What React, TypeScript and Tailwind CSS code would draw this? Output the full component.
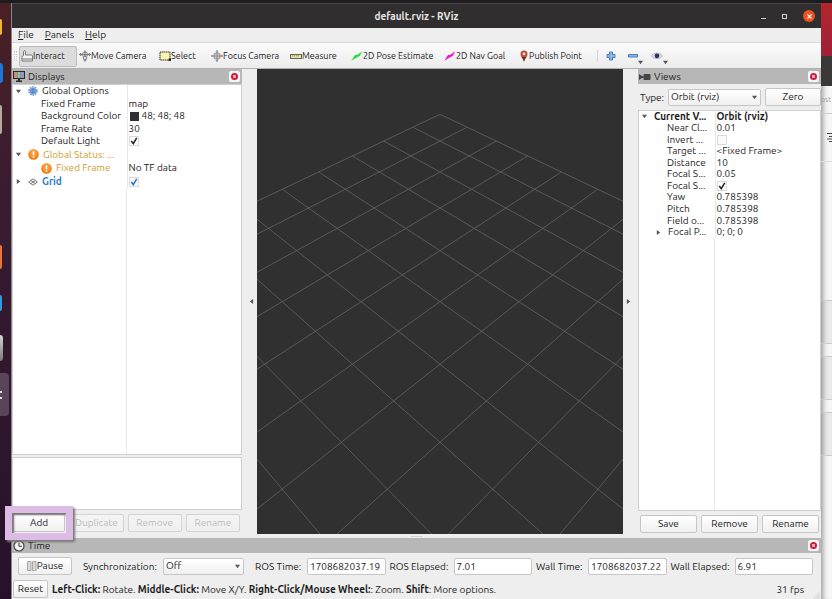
import { useState, type ReactNode } from 'react';
import { clsx } from 'clsx';

interface TreeRow {
  name: string;
  value?: string;
  indent: number;
  arrow?: 'open' | 'closed';
  icon?: ReactNode;
  checked?: boolean;
  swatch?: boolean;
  tone?: string;
  bold?: boolean;
}

const GRID_CELLS = 10;

// Projects a ground plane point (cells counted from the far corner) to the view
function project(i: number, j: number) {
  const depth = 1 - (i + j) / 30;
  return { x: 183 + ((i - j) * 26.3) / depth, y: 374.8 / depth - 329.5 };
}

function GearIcon() {
  return (
    <svg viewBox="0 0 10 10" className="size-2.5 shrink-0">
      <circle cx="5" cy="5" r="4" fill="none" stroke="#6d97cf" strokeWidth="1.6" strokeDasharray="1.6 0.9" />
      <circle cx="5" cy="5" r="3.6" fill="#8fb3e2" />
      <path d="M1.500 5h7M5 1.800v6.400M2.500 3.200h5M2.500 6.800h5" stroke="#4473b5" strokeWidth="0.7" />
    </svg>
  );
}

function WarnIcon() {
  return (
    <svg viewBox="0 0 12 12" className="size-[11px] shrink-0">
      <circle cx="6" cy="6" r="5.7" fill="#f07d10" />
      <circle cx="6" cy="5" r="4.2" fill="#fb9a3b" />
      <path d="M6 2.4v4.4" stroke="#fff" strokeWidth="1.7" />
      <circle cx="6" cy="8.8" r="1" fill="#fff" />
    </svg>
  );
}

function GridIcon() {
  return (
    <svg viewBox="0 0 12 10" className="h-2 w-2.5 shrink-0" fill="none" stroke="#555" strokeWidth="1">
      <path d="M6 1 11.5 5 6 9 .5 5zM3.2 3l5.6 4M8.8 3 3.2 7" />
    </svg>
  );
}

function MonitorIcon() {
  return (
    <svg viewBox="0 0 12 11" className="h-[11px] w-3">
      <path d="M0 0h12v8H0z" fill="#2b2b2b" />
      <path d="M1 1h3.4v6H1z" fill="#d98583" />
      <path d="M4.4 1h3.3v6H4.4z" fill="#83cf97" />
      <path d="M7.7 1H11v6H7.7z" fill="#9a92cf" />
      <path d="M5 8h2v1.500h2V11H3V9.500h2z" fill="#2b2b2b" />
    </svg>
  );
}

function CameraIcon() {
  return (
    <svg viewBox="0 0 12 8" className="h-2 w-3" fill="#444">
      <path d="M0 1v6l3-2h1.500V3H3z" />
      <rect x="4.5" y="1" width="7" height="6" rx="1" />
    </svg>
  );
}

function ClockIcon() {
  return (
    <svg viewBox="0 0 12 12" className="size-3">
      <circle cx="6" cy="6" r="5" fill="#f4f4f4" stroke="#444" strokeWidth="1.2" />
      <path d="M6 2.5V6.3h3" fill="none" stroke="#333" strokeWidth="1" />
    </svg>
  );
}

const toolIcons = {
  interact: (
    <svg viewBox="0 0 12 12" className="size-3" fill="#f4f4f4" stroke="#777" strokeWidth="1">
      <path d="M1 11V6.5l1.6-1V1.6c0-1.3 2-1.3 2 0V5h5.8c.8 0 1.1.5 1.1 1.2V11z" />
      <path d="M1.2 9h10" fill="none" />
    </svg>
  ),
  move: (
    <svg viewBox="0 0 12 12" className="size-3" fill="none" stroke="#777" strokeWidth="0.9">
      <path d="M0 4.5h12M2 3 .5 4.5 2 6M10 3l1.5 1.5L10 6M4.5 2 6 .8 7.500 2M6 1v10M4.500 10 6 11.300 7.500 10" />
      <ellipse cx="6" cy="4.500" rx="3.500" ry="1.800" />
      <circle cx="6" cy="8" r="1.800" fill="#ddd" />
    </svg>
  ),
  select: (
    <svg viewBox="0 0 12 10" className="h-2.5 w-3">
      <rect x="1" y="1" width="10" height="8" fill="#fbf5b5" stroke="#333" strokeWidth="1" strokeDasharray="1.500 .5" />
      <path d="M9.500 7.500H12V10H9.500z" fill="#222" />
    </svg>
  ),
  focus: (
    <svg viewBox="0 0 12 12" className="size-3" fill="none" stroke="#888" strokeWidth="0.9">
      <circle cx="6" cy="6" r="3.300" fill="#ccc" />
      <path d="M0 6h12M6 0v12M4.800 1.200h2.400M4.800 10.800h2.400M1.200 4.800v2.400M10.800 4.800v2.400" />
    </svg>
  ),
  measure: (
    <svg viewBox="0 0 12 5" className="h-[5px] w-3">
      <rect x=".5" y=".5" width="11" height="4" fill="#e9dfa8" stroke="#6b6652" />
      <path d="M2.500 1v1.500M4.500 1v1.500M6.500 1v1.500M8.500 1v1.500" stroke="#6b6652" strokeWidth="0.6" />
    </svg>
  ),
  pose: (
    <svg viewBox="0 0 12 10" className="h-2.5 w-3">
      <path d="M.3 9.800 4 4 6 4 11.200.3 8.500 5.200 6.500 6z" fill="#19e23b" />
    </svg>
  ),
  goal: (
    <svg viewBox="0 0 12 10" className="h-2.5 w-3">
      <path d="M.3 9.800 4 4 6 4 11.200.3 8.500 5.200 6.500 6z" fill="#f010d0" />
    </svg>
  ),
  point: (
    <svg viewBox="0 0 10 12" className="h-3 w-2.5">
      <path d="M5 11.800C4.300 8.500 1.500 7 1.500 4a3.500 3.500 0 0 1 7 0C8.500 7 5.700 8.500 5 11.800z" fill="#c04c32" />
      <path d="M5 11.800C4.400 9.400 3.500 8.200 2.700 7h4.600C6.500 8.200 5.600 9.400 5 11.800z" fill="#5e3a20" />
      <circle cx="5" cy="3.900" r="1.400" fill="#fbe9e4" />
    </svg>
  ),
};

const tools = [
  { label: 'Interact', icon: toolIcons.interact, width: 'w-[58px] pl-px' },
  { label: 'Move Camera', icon: toolIcons.move, width: 'w-[80px] pl-px' },
  { label: 'Select', icon: toolIcons.select, width: 'w-[53px] pl-px' },
  { label: 'Focus Camera', icon: toolIcons.focus, width: 'w-[79px]' },
  { label: 'Measure', icon: toolIcons.measure, width: 'w-[61px]' },
  { label: '2D Pose Estimate', icon: toolIcons.pose, width: 'w-[93px]' },
  { label: '2D Nav Goal', icon: toolIcons.goal, width: 'w-[75px]' },
  { label: 'Publish Point', icon: toolIcons.point, width: 'w-[75px]' },
];

const displayRows: TreeRow[] = [
  { name: 'Global Options', indent: 0, arrow: 'open', icon: <GearIcon /> },
  { name: 'Fixed Frame', indent: 1, value: 'map' },
  { name: 'Background Color', indent: 1, value: '48; 48; 48', swatch: true },
  { name: 'Frame Rate', indent: 1, value: '30' },
  { name: 'Default Light', indent: 1, checked: true },
  { name: 'Global Status: ...', indent: 0, arrow: 'open', icon: <WarnIcon />, tone: 'text-[#d29a2c]' },
  { name: 'Fixed Frame', indent: 1, value: 'No TF data', icon: <WarnIcon />, tone: 'text-[#d29a2c]' },
  { name: 'Grid', indent: 0, arrow: 'closed', icon: <GridIcon />, checked: true, tone: 'text-[#2f7fd0]', bold: true },
];

const viewRows: TreeRow[] = [
  { name: 'Current V...', value: 'Orbit (rviz)', indent: 0, arrow: 'open', bold: true },
  { name: 'Near Cl...', value: '0.01', indent: 1 },
  { name: 'Invert ...', indent: 1, checked: false },
  { name: 'Target ...', value: '<Fixed Frame>', indent: 1 },
  { name: 'Distance', value: '10', indent: 1 },
  { name: 'Focal S...', value: '0.05', indent: 1 },
  { name: 'Focal S...', indent: 1, checked: true },
  { name: 'Yaw', value: '0.785398', indent: 1 },
  { name: 'Pitch', value: '0.785398', indent: 1 },
  { name: 'Field o...', value: '0.785398', indent: 1 },
  { name: 'Focal P...', value: '0; 0; 0', indent: 1, arrow: 'closed' },
];

const clocks = [
  { label: 'ROS Time:', value: '1708682037.19', width: 'w-12' },
  { label: 'ROS Elapsed:', value: '7.01', width: 'w-[60px]' },
  { label: 'Wall Time:', value: '1708682037.22', width: 'w-12' },
  { label: 'Wall Elapsed:', value: '6.91', width: 'w-[60px]' },
];

function Arrow({ dir, className }: { dir: 'down' | 'right' | 'left'; className?: string }) {
  const paths = { down: 'M0 1h6L3 5z', right: 'M1 0v6l4-3z', left: 'M5 0v6L1 3z' };
  return (
    <svg viewBox="0 0 6 6" className={clsx('size-[5px] shrink-0', className)} fill="#555">
      <path d={paths[dir]} />
    </svg>
  );
}

function Tick({ label, initial, blue }: { label: string; initial: boolean; blue?: boolean }) {
  const [on, setOn] = useState(initial);
  return (
    <span className="relative block size-2.5">
      <input
        type="checkbox"
        aria-label={label}
        checked={on}
        onChange={() => setOn(!on)}
        className="block size-2.5 appearance-none border border-[#dadada] bg-[#fafafa]"
      />
      {on && (
        <svg viewBox="0 0 10 10" className="pointer-events-none absolute inset-0" fill="none" stroke={blue ? '#2a6fc0' : '#222'} strokeWidth="1.500">
          <path d="M2.300 5 4.300 7.700 7.700 1.800" />
        </svg>
      )}
    </span>
  );
}

function PanelButton({ children, className, disabled }: { children: ReactNode; className?: string; disabled?: boolean }) {
  return (
    <button
      disabled={disabled}
      className={clsx(
        'flex h-[18px] items-center justify-center rounded-xs border border-[#c6c6c6] bg-linear-to-b from-white to-[#f0f0f0] leading-none disabled:border-[#d4d4d4] disabled:from-[#f4f4f4] disabled:text-[#bdbdbd]',
        className,
      )}
    >
      {children}
    </button>
  );
}

function DockHeader({ icon, title }: { icon: ReactNode; title: string }) {
  return (
    <div className="flex h-[15px] shrink-0 items-center gap-[3px] bg-[#b7b7b7] pr-0.5 pl-px">
      {icon}
      <h2 className="leading-none">{title}</h2>
      <button aria-label={`Close ${title}`} className="ml-auto flex size-[11px] items-center justify-center rounded-xs bg-[#f6f6f6]">
        <svg viewBox="0 0 8 8" className="size-[7px]">
          <circle cx="4" cy="4" r="4" fill="#d3183c" />
          <path d="M2.700 2.700l2.600 2.600M5.300 2.700 2.700 5.300" stroke="#fff" strokeWidth="1.200" />
        </svg>
      </button>
    </div>
  );
}

interface ComboProps {
  label: string;
  options: string[];
  className: string;
  labelWidth?: string;
}

function Combo({ label, options, className, labelWidth }: ComboProps) {
  return (
    <label className="flex shrink-0 items-center gap-1">
      <span className={labelWidth}>{label}</span>
      <span className={clsx('relative', className)}>
        <select className="block h-[17px] w-full appearance-none rounded-xs border border-[#c6c6c6] bg-linear-to-b from-white to-[#f0f0f0] pl-0.5 leading-none">
          {options.map((option) => (
            <option key={option}>{option}</option>
          ))}
        </select>
        <Arrow dir="down" className="pointer-events-none absolute top-1.5 right-1" />
      </span>
    </label>
  );
}

interface TreeProps {
  rows: TreeRow[];
  height: string;
  column: string;
}

const indents = ['pl-[3px]', 'pl-7', 'pl-[17px]'];

function PropertyTree({ rows, height, column }: TreeProps) {
  return (
    <div className="flex min-h-0 flex-1 flex-col overflow-hidden border border-[#d0d0d0] bg-white">
      <table className={clsx('w-full shrink-0 table-fixed border-collapse leading-none', height)}>
        <tbody>
          {rows.map((row, i) => (
            <tr key={i}>
              <td className={clsx('border-r border-[#e8e8e8] p-0 whitespace-nowrap', column, row.tone, row.bold && 'font-bold')}>
                <div className={clsx('flex items-center gap-1', indents[row.arrow ? row.indent * 2 : row.indent])}>
                  {row.arrow && <Arrow dir={row.arrow === 'open' ? 'down' : 'right'} className="mr-[3px]" />}
                  {row.icon}
                  {row.name}
                </div>
              </td>
              <td className={clsx('p-0 pl-px whitespace-nowrap', row.bold && 'font-bold')}>
                {row.checked !== undefined ? (
                  <Tick label={row.name} initial={row.checked} blue={row.name === 'Grid'} />
                ) : (
                  <span className="flex items-center gap-[3px]">
                    {row.swatch && <i className="ml-px size-[9px] bg-[#303030]" />}
                    {row.value}
                  </span>
                )}
              </td>
            </tr>
          ))}
        </tbody>
      </table>
      <div className={clsx('flex-1 border-r border-[#e8e8e8]', column)} />
    </div>
  );
}

function Viewport() {
  const lines = Array.from({ length: GRID_CELLS + 1 }, (_, n) => [
    [project(n, 0), project(n, GRID_CELLS)],
    [project(0, n), project(GRID_CELLS, n)],
  ]).flat();
  return (
    <main className="min-w-0 flex-1 overflow-hidden bg-[#303030]">
      <svg viewBox="0 0 366 465" preserveAspectRatio="xMidYMin slice" className="size-full">
        {lines.map(([a, b], i) => (
          <line key={i} x1={a.x} y1={a.y} x2={b.x} y2={b.y} stroke="#5e5e5e" strokeWidth="0.9" />
        ))}
      </svg>
    </main>
  );
}

function Launcher() {
  return (
    <aside className="flex w-[11px] shrink-0 flex-col items-start bg-linear-to-b from-[#4a2024] via-[#3a1c30] via-30% to-[#25122a]">
      <i className="mt-4 h-4 w-0.5 rounded-r-full bg-[#f5b62e]" />
      <i className="mt-7 h-5 w-[3px] rounded-r-full bg-[#1a78d6]" />
      <i className="mt-[22px] h-[29px] w-0.5 rounded-r-sm bg-[#b3ad98]" />
      <i className="mt-[111px] h-6 w-0.5 rounded-r-sm bg-[#ee7336]" />
      <i className="mt-[26px] h-4 w-0.5 rounded-r-full bg-[#2d9be0]" />
      <i className="mt-6 h-[26px] w-[3px] rounded-r-sm bg-linear-to-b from-[#d5d6d2] to-[#777c72]" />
      <span className="mt-3 flex h-[43px] w-[9px] items-center rounded-r-sm bg-[#58455a]">
        <i className="h-2 w-0.5 border-y-2 border-[#e4e0e4]" />
      </span>
    </aside>
  );
}

function BackgroundWindow() {
  return (
    <aside className="flex w-[11px] shrink-0 flex-col overflow-hidden bg-[#f6f6f6] text-[#999] shadow-[inset_5px_0_5px_-3px_#999]">
      <div className="h-[53px] shrink-0 bg-linear-to-b from-[#b3262c] to-[#a02038]" />
      <div className="h-[30px] shrink-0 bg-[#3a3836]" />
      <div className="flex h-7 shrink-0 items-center border-b border-[#ccc] text-[7px] leading-none">ost</div>
      <div className="flex h-12 shrink-0 items-center justify-end border-b border-[#ddd]">
        <svg viewBox="0 0 5 9" className="h-[9px] w-[5px]" stroke="#444">
          <path d="M0 .5h5M2 3.500h3M0 6h5M2 8.500h3" />
        </svg>
      </div>
      <div className="mt-[138px] h-11 shrink-0 border-y border-[#ccc] bg-black/5" />
      <div className="mt-3 h-11 shrink-0 border-y border-[#ccc] bg-black/5" />
      <div className="mt-3 h-11 shrink-0 border-y border-[#ccc] bg-black/5" />
    </aside>
  );
}

export default function App() {
  return (
    <div className="flex h-screen flex-col overflow-hidden bg-[#1d1d1d] pt-[3px] font-['Ubuntu','Noto_Sans',sans-serif] text-[10px] text-[#1c1c1c]">
      <div className="flex min-h-0 flex-1">
        <Launcher />
        <div className="flex min-w-0 flex-1 flex-col border-l border-[#8a8488] bg-[#eeeeee]">
          {/* Title bar */}
          <header className="flex h-[25px] shrink-0 items-center border-t border-[#484646] bg-[#302e2e] text-[#e6e6e6]">
            <h1 className="flex-1 pl-[60px] text-center font-bold">default.rviz - RViz</h1>
            <div className="flex items-center gap-4 pr-1.5">
              <button aria-label="Minimize" className="mt-1 h-px w-[5px] bg-[#d0d0d0]" />
              <button aria-label="Maximize" className="size-[5px] border border-[#d0d0d0]" />
              <button aria-label="Close" className="flex size-3 items-center justify-center rounded-full bg-[#e95420]">
                <svg viewBox="0 0 6 6" className="size-[5px]" stroke="#fff" strokeWidth="1.300">
                  <path d="M.5.5l5 5M5.500.5l-5 5" />
                </svg>
              </button>
            </div>
          </header>

          {/* Menu bar */}
          <nav className="flex h-[15px] shrink-0 items-center gap-[11px] border-b border-[#dadada] pl-1.5 leading-none">
            <button><u>F</u>ile</button>
            <button><u>P</u>anels</button>
            <button><u>H</u>elp</button>
          </nav>

          {/* Toolbar */}
          <div className="flex h-[26px] shrink-0 items-center border-b border-[#b0b0b0] bg-linear-to-b from-[#fbfbfb] to-[#ececec] pt-px text-[9px] leading-none">
            <i className="mr-0.5 ml-0.5 h-2.5 w-[3px] border-x border-dotted border-[#ccc]" />
            {tools.map((tool, i) => (
              <button
                key={tool.label}
                className={clsx('flex h-[21px] shrink-0 items-center rounded-xs border whitespace-nowrap', tool.width, i === 0 ? 'border-[#bdbdbd] bg-[#dcdcdc]' : 'border-transparent')}
              >
                {tool.icon}
                {tool.label}
              </button>
            ))}
            <i className="mr-2 ml-1 h-3 w-px bg-[#d4d4d4]" />
            <button aria-label="Add tool">
              <svg viewBox="0 0 10 10" className="size-2.5">
                <path d="M3.500 1h3v2.500H9v3H6.500V9h-3V6.500H1v-3h2.500z" fill="#8db4e2" stroke="#4a7ebb" />
              </svg>
            </button>
            <button aria-label="Remove tool" className="ml-3 flex items-center">
              <svg viewBox="0 0 10 10" className="size-2.5">
                <path d="M.5 3.500h9v2.500h-9z" fill="#8db4e2" stroke="#4a7ebb" />
              </svg>
              <Arrow dir="down" className="mt-3" />
            </button>
            <button aria-label="Tool visibility" className="ml-2 flex items-center">
              <svg viewBox="0 0 12 10" className="h-2.5 w-3">
                <path d="M.5 5C3 1 9 1 11.500 5 9 8.500 3 8.500.5 5z" fill="#e4e4e4" stroke="#aaa" strokeWidth="0.8" />
                <circle cx="6" cy="4.800" r="2.400" fill="#30336b" />
              </svg>
              <Arrow dir="down" className="mt-3" />
            </button>
          </div>

          <div className="flex min-h-0 flex-1">
            {/* Displays */}
            <section className="flex w-[230px] shrink-0 flex-col">
              <DockHeader icon={<MonitorIcon />} title="Displays" />
              <PropertyTree rows={displayRows} height="h-[103px]" column="w-[114px]" />
              <div className="mt-0.5 h-[53px] shrink-0 border border-[#d0d0d0] bg-white" />
              <div className="flex gap-1 pt-1 pr-0.5 pb-0.5 pl-px">
                <div className="relative z-10 flex-1">
                  <PanelButton className="w-full">Add</PanelButton>
                  <div className="pointer-events-none absolute -inset-2 border-[7px] border-[#dcbce4] shadow-[2px_2px_2px_#777,inset_2px_2px_2px_#777]" />
                </div>
                <PanelButton disabled className="flex-1">Duplicate</PanelButton>
                <PanelButton disabled className="flex-1">Remove</PanelButton>
                <PanelButton disabled className="flex-1">Rename</PanelButton>
              </div>
            </section>
            <div className="flex w-[15px] shrink-0 items-center justify-center pl-1">
              <Arrow dir="left" />
            </div>

            <Viewport />

            <div className="flex w-[15px] shrink-0 items-center justify-center pr-1">
              <Arrow dir="right" />
            </div>
            {/* Views */}
            <section className="flex w-[183px] shrink-0 flex-col">
              <DockHeader icon={<CameraIcon />} title="Views" />
              <div className="flex items-center gap-1 pt-1 pb-[3px] pl-0.5">
                <Combo label="Type:" options={['Orbit (rviz)']} className="w-[93px]" />
                <PanelButton className="flex-1">Zero</PanelButton>
              </div>
              <div className="mt-px flex min-h-0 flex-1 flex-col">
                <PropertyTree rows={viewRows} height="h-[127px]" column="w-[76px]" />
              </div>
              <div className="flex gap-1 px-0.5 pt-1 pb-px">
                <PanelButton className="flex-1">Save</PanelButton>
                <PanelButton className="flex-1">Remove</PanelButton>
                <PanelButton className="flex-1">Rename</PanelButton>
              </div>
            </section>
          </div>

          <div className="flex h-1 shrink-0 items-center justify-center">
            <i className="h-px w-3 bg-[#d4d4d4]" />
          </div>

          {/* Time */}
          <section>
            <DockHeader icon={<ClockIcon />} title="Time" />
            <div className="flex h-[26px] items-center gap-1 pr-2 pl-1.5 whitespace-nowrap">
              <PanelButton className="mr-[7px] w-[54px] shrink-0">
                <svg viewBox="0 0 10 10" className="size-2.5" fill="#d8d8d8" stroke="#999" strokeWidth="0.8">
                  <path d="M.5.5h3.500v9H.5zM5.500.5H9v9H5.500z" />
                </svg>
                Pause
              </PanelButton>
              <Combo label="Synchronization:" options={['Off']} className="mr-[7px] w-[81px]" labelWidth="w-[76px]" />
              {clocks.map((clock) => (
                <label key={clock.label} className="flex flex-auto items-center gap-1">
                  <span className={clsx('shrink-0', clock.width)}>{clock.label}</span>
                  <input readOnly value={clock.value} className="h-[17px] w-[76px] flex-1 rounded-xs border border-[#c6c6c6] bg-white px-0.5 leading-none" />
                </label>
              ))}
            </div>
          </section>

          {/* Status bar */}
          <footer className="flex h-5 shrink-0 items-center gap-1 pl-px whitespace-nowrap">
            <PanelButton className="w-[35px]">Reset</PanelButton>
            <p>
              <b>Left-Click:</b> Rotate. <b>Middle-Click:</b> Move X/Y. <b>Right-Click/Mouse Wheel:</b>: Zoom. <b>Shift</b>: More options.
            </p>
            <output className="mr-2 ml-auto">31 fps</output>
            <svg viewBox="0 0 8 8" className="-ml-1 mr-px size-2 self-end" stroke="#ccc" strokeWidth="0.800">
              <path d="M7 1h1M5 3h3M3 5h5M1 7h7" />
            </svg>
          </footer>
        </div>
        <BackgroundWindow />
      </div>
    </div>
  );
}
